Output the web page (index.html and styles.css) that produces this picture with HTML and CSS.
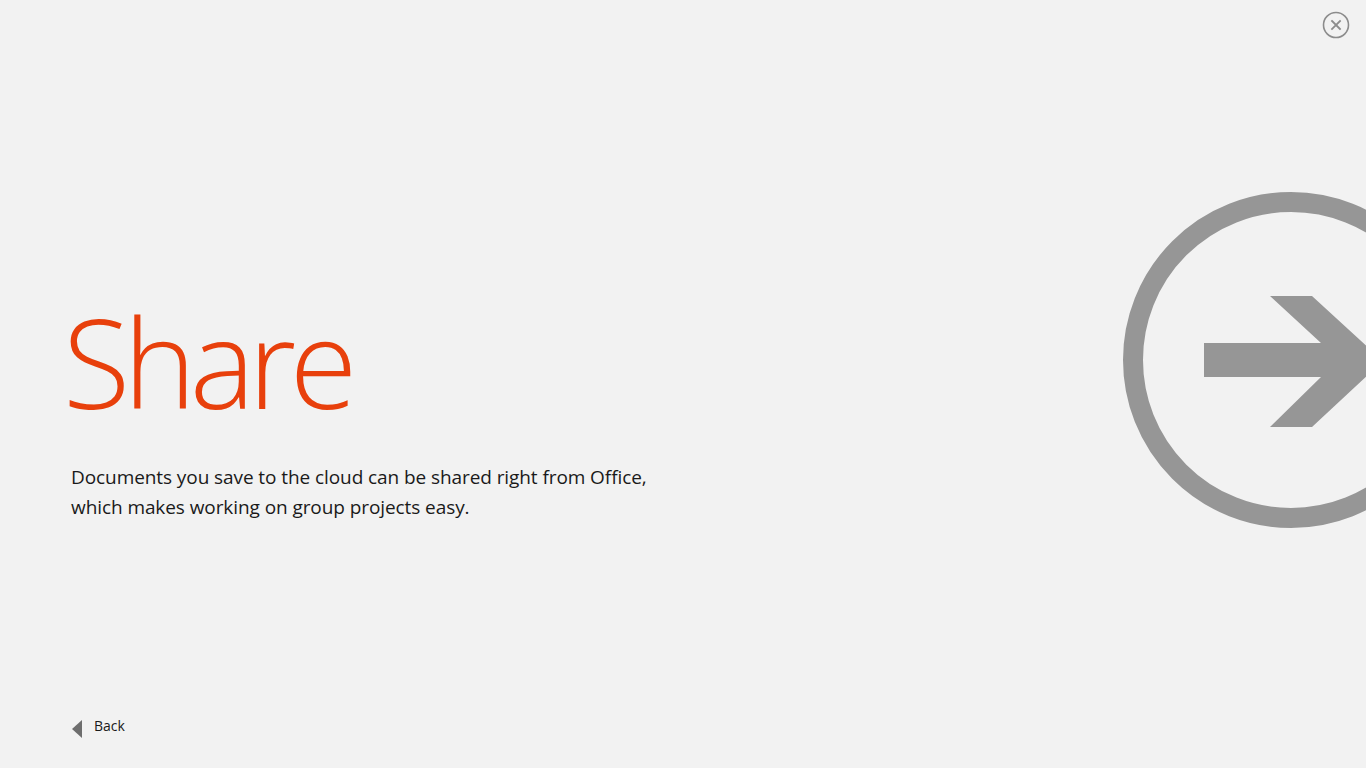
FILE: index.html
```html
<!DOCTYPE html>
<html lang="en">
<head>
<meta charset="utf-8">
<title>Share</title>
<link rel="stylesheet" href="styles.css">
</head>
<body>
<div class="page">
  <main class="content">
    <h1 class="title">Share</h1>
    <p class="desc">Documents you save to the cloud can be shared right from Office,<br>which makes working on group projects easy.</p>
    <a class="back" href="#"><span class="back-tri"></span><span class="back-label">Back</span></a>
  </main>
  <div class="next">
    <svg class="next-icon" width="243" height="336" viewBox="0 0 243 336" aria-label="Next">
      <circle cx="168" cy="168" r="158" fill="none" stroke="#969696" stroke-width="20"/>
      <polygon points="81,151 198,151 147,104 189,104 260,169 189,235 147,235 198,185 81,185" fill="#969696"/>
    </svg>
  </div>
  <button class="close" aria-label="Close">
    <svg width="28" height="28" viewBox="0 0 28 28">
      <circle cx="14" cy="14" r="12.5" fill="none" stroke="#8c8c8c" stroke-width="1.6"/>
      <path d="M10 10 L18 18 M18 10 L10 18" stroke="#8c8c8c" stroke-width="1.8" stroke-linecap="square"/>
    </svg>
  </button>
</div>
</body>
</html>
```
FILE: styles.css
```css
html, body {
  margin: 0;
  padding: 0;
  background: #f2f2f2;
}
body {
  font-family: "Open Sans", "Noto Sans", "Liberation Sans", sans-serif;
  color: #1a1a1a;
}
.page {
  position: relative;
  width: 1366px;
  height: 768px;
  display: flex;
  overflow: hidden;
}
.content {
  flex: 1;
  display: flex;
  flex-direction: column;
  padding-left: 63px;
}
.title {
  margin: 277px 0 0 0;
  font-weight: 300;
  font-size: 123px;
  line-height: 170px;
  color: #e8400c;
  letter-spacing: -6.5px;
}
.desc {
  margin: 15px 0 0 8px;
  font-size: 19px;
  line-height: 30px;
  letter-spacing: -0.08px;
  color: #1a1a1a;
}
.back {
  margin: auto 0 30px 9px;
  display: flex;
  align-items: center;
  gap: 12px;
  color: #1a1a1a;
  text-decoration: none;
  font-size: 14px;
}
.back-tri {
  width: 0;
  height: 0;
  border-top: 9px solid transparent;
  border-bottom: 9px solid transparent;
  border-right: 10px solid #6e6e6e;
  margin-top: 8px;
}
.next {
  width: 243px;
  padding-top: 192px;
}
.next-icon {
  display: block;
}
.close {
  position: absolute;
  top: 11px;
  right: 16px;
  width: 28px;
  height: 28px;
  padding: 0;
  border: 0;
  background: transparent;
}
.close svg {
  display: block;
}
```
